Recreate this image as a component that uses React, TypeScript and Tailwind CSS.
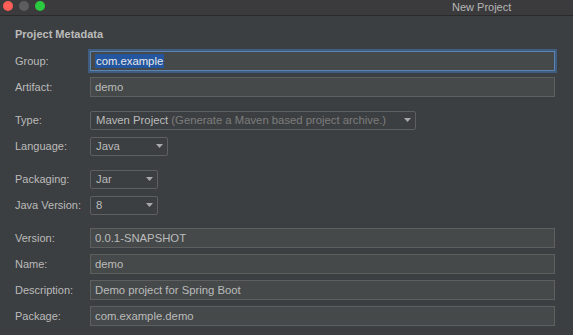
import type { ReactNode } from 'react';

function Arrow() {
  return (
    <svg width="7" height="4" viewBox="0 0 7 4" className="shrink-0">
      <path d="M0 0 H7 L3.5 4 Z" fill="#a9a9a9" />
    </svg>
  );
}

function Row({ label, children, gap }: { label: string; children: ReactNode; gap?: boolean }) {
  return (
    <div className={`flex items-center h-[26px] ${gap ? 'mt-[7px]' : ''}`}>
      <div className="w-[75px] shrink-0 text-[11px] text-[#bbbbbb]">{label}</div>
      {children}
    </div>
  );
}

function TextField({ value }: { value: string }) {
  return (
    <div className="w-[465px] h-[20px] flex items-center pl-[4px] border border-[#5e6060] bg-[#45494a] text-[11.3px] text-[#bbbbbb]">
      {value}
    </div>
  );
}

function Select({ width, value, hint }: { width: string; value: string; hint?: string }) {
  return (
    <div className={`${width} h-[19px] flex items-center justify-between pl-[5px] pr-[4px] border border-[#5e6060] rounded-[2px] bg-[#3c3f41] text-[11.3px]`}>
      <span className="text-[#bbbbbb] whitespace-nowrap">
        {value}
        {hint && <span className="text-[#7d7d7d]"> {hint}</span>}
      </span>
      <Arrow />
    </div>
  );
}

export default function App() {
  return (
    <div className="w-[573px] h-[335px] overflow-hidden bg-[#3c3f41] font-['Liberation_Sans',Arial,sans-serif]">
      {/* title bar */}
      <div className="relative h-[16px] bg-[#3b3b3d] border-b border-[#2a2a2b] flex items-start pt-[1px] pl-[3px] gap-[6px]">
        <div className="w-[10px] h-[10px] rounded-full bg-[#fd5f57]" />
        <div className="w-[10px] h-[10px] rounded-full bg-[#5d5d5f]" />
        <div className="w-[10px] h-[10px] rounded-full bg-[#2ac940]" />
        <span className="absolute left-[452px] top-[0px] text-[11px] leading-[14px] text-[#b6b6b6]">New Project</span>
      </div>

      <div className="pl-[15px] pt-[12px]">
        <div className="h-[13px] leading-[13px] text-[11px] font-bold text-[#bbbbbb]">Project Metadata</div>

        <div className="mt-[7px] flex flex-col">
          <Row label="Group:">
            <div className="w-[465px] h-[20px] flex items-center pl-[4px] border border-[#5c82b0] ring-2 ring-[#3e5d80] bg-[#45494a] text-[11.3px]">
              <span className="bg-[#2456a0] text-[#e8e8e8] px-[1px] leading-[14px]">com.example</span>
            </div>
          </Row>
          <Row label="Artifact:">
            <TextField value="demo" />
          </Row>

          <Row label="Type:" gap>
            <Select width="w-[326px]" value="Maven Project" hint="(Generate a Maven based project archive.)" />
          </Row>
          <Row label="Language:">
            <Select width="w-[78px]" value="Java" />
          </Row>

          <Row label="Packaging:" gap>
            <Select width="w-[68px]" value="Jar" />
          </Row>
          <Row label="Java Version:">
            <Select width="w-[68px]" value="8" />
          </Row>

          <Row label="Version:" gap>
            <TextField value="0.0.1-SNAPSHOT" />
          </Row>
          <Row label="Name:">
            <TextField value="demo" />
          </Row>
          <Row label="Description:">
            <TextField value="Demo project for Spring Boot" />
          </Row>
          <Row label="Package:">
            <TextField value="com.example.demo" />
          </Row>
        </div>
      </div>
    </div>
  );
}
